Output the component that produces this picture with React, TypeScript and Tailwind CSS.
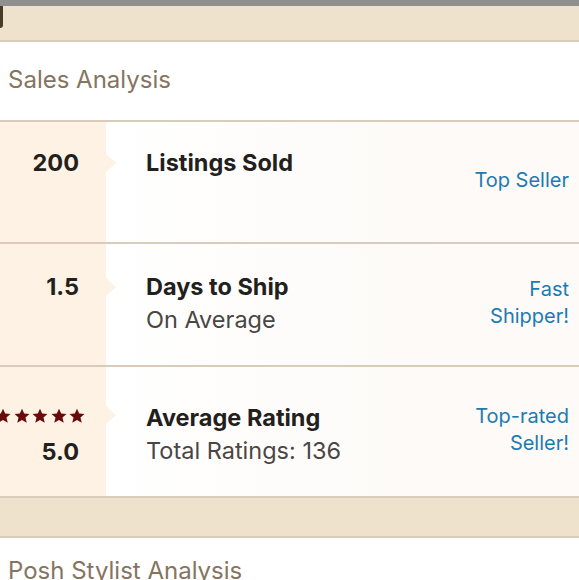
const font = { fontFamily: 'Inter, "Liberation Sans", sans-serif' }

function Star() {
  return (
    <svg viewBox="0 0 24 24" className="size-[16px] shrink-0 fill-[#6a0b0b]">
      <path d="M12 1l3.3 7.3 7.9.7-6 5.2 1.9 7.8L12 17.9 4.9 22l1.9-7.8-6-5.2 7.9-.7z" />
    </svg>
  )
}

interface StatRowProps {
  height: string
  padTop: string
  left: React.ReactNode
  title: string
  sub?: string
  badge: string[]
}

function StatRow({ height, padTop, left, title, sub, badge }: StatRowProps) {
  return (
    <div className={`flex border-b-2 border-[#d9ccbb] ${height}`}>
      <div className={`w-[106px] shrink-0 bg-[#fdf2e3] pr-[27px] ${padTop}`}>{left}</div>
      <div className={`flex flex-1 bg-gradient-to-r from-white to-[#fdfaf7] pl-[40px] ${padTop}`}>
        <div className="flex-1">
          <div className="text-[23.5px] font-bold leading-[33px] text-[#231f1c]">{title}</div>
          {sub && <div className="text-[23.5px] leading-[33px] text-[#4a4643]">{sub}</div>}
        </div>
      </div>
      <div className="flex w-[140px] shrink-0 items-center justify-end bg-[#fdfaf7] pr-[10px]">
        <div className="pb-[4px] text-right text-[20px] leading-[27px] text-[#1c7bb1]">
          {badge.map((b) => (
            <div key={b}>{b}</div>
          ))}
        </div>
      </div>
    </div>
  )
}

function Chevron({ top }: { top: string }) {
  return (
    <div
      className={`absolute left-[106px] ${top} h-0 w-0 border-y-[9px] border-l-[10px] border-y-transparent border-l-[#fdf2e3]`}
    />
  )
}

const num = 'text-right text-[23.5px] font-bold leading-[33px] text-[#231f1c]'

export default function App() {
  return (
    <div className="h-[580px] w-[579px] overflow-hidden bg-white" style={font}>
      <div className="h-[6px] bg-[#8f8f8f]" />
      <div className="flex h-[36px] border-b-2 border-[#d9ccbb] bg-[#efe2cd]">
        <div className="h-[22px] w-[3px] rounded-br-[3px] bg-[#4b3a2a]" />
      </div>
      <div className="flex h-[80px] items-center border-b-2 border-[#d9ccbb] pb-[2px] pl-[8px] text-[24px] text-[#85745f]">
        Sales Analysis
      </div>

      <div className="relative">
        <StatRow
          height="h-[122px]"
          padTop="pt-[24px]"
          left={<div className={num}>200</div>}
          title="Listings Sold"
          badge={['Top Seller']}
        />
        <Chevron top="top-[32px]" />
      </div>

      <div className="relative">
        <StatRow
          height="h-[123px]"
          padTop="pt-[26px]"
          left={<div className={num}>1.5</div>}
          title="Days to Ship"
          sub="On Average"
          badge={['Fast', 'Shipper!']}
        />
        <Chevron top="top-[34px]" />
      </div>

      <div className="relative">
        <StatRow
          height="h-[131px]"
          padTop="pt-[34px]"
          left={
            <div className="flex flex-col items-end">
              <div className="-mr-[6px] flex h-[30px] items-center gap-[2.5px]">
                <Star />
                <Star />
                <Star />
                <Star />
                <Star />
              </div>
              <div className={`mt-[4px] ${num}`}>5.0</div>
            </div>
          }
          title="Average Rating"
          sub="Total Ratings: 136"
          badge={['Top-rated', 'Seller!']}
        />
        <Chevron top="top-[39px]" />
      </div>

      <div className="h-[40px] border-b-2 border-[#d9ccbb] bg-[#efe2cd]" />
      <div className="flex h-[60px] items-start pl-[8px] pt-[18px] text-[24px] leading-[30px] text-[#85745f]">
        Posh Stylist Analysis
      </div>
    </div>
  )
}
